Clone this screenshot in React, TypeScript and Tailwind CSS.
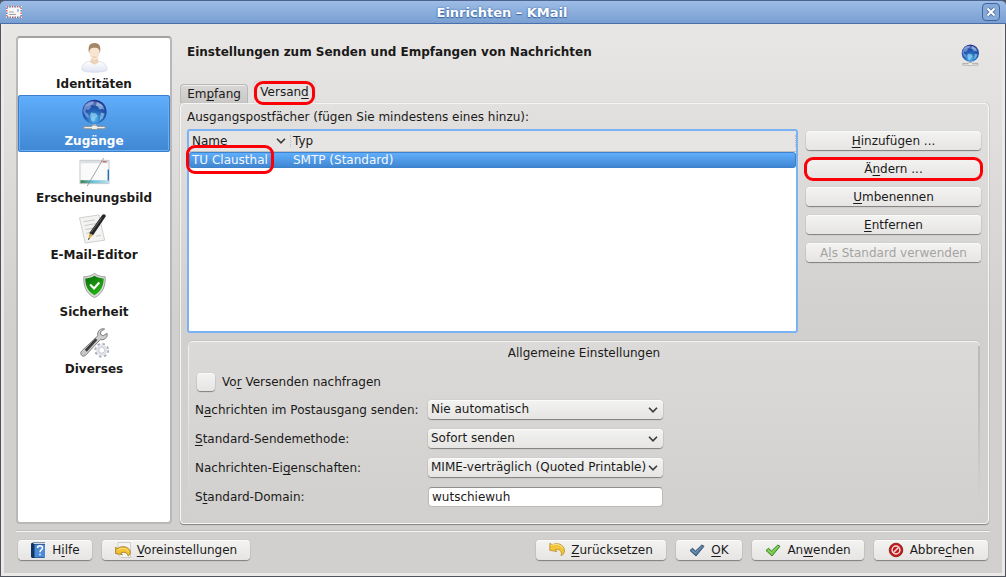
import type { ReactNode } from 'react'

const Key = ({ children }: { children: ReactNode }) => (
  <span className="underline decoration-1 underline-offset-2 [text-decoration-skip-ink:none]">
    {children}
  </span>
)

const GlobeIcon = ({ className, id }: { className: string; id: string }) => (
  <svg viewBox="0 0 32 32" className={className} aria-hidden="true">
    <defs>
      <radialGradient id={id} cx="0.5" cy="0.8" r="0.75">
        <stop offset="0" stopColor="#55bdf2" />
        <stop offset="0.45" stopColor="#2565b8" />
        <stop offset="1" stopColor="#1f3390" />
      </radialGradient>
    </defs>
    <path d="M15 26h3v3h-3z" fill="#c8c8c4" />
    <path d="M5.500 28.300h8l1-1.300h4l1 1.300H27.500v2.400h-8l-1 .8h-4l-1-.8h-8z" fill="#eeeeea" stroke="#85857e" strokeWidth="0.8" />
    <circle cx="16.500" cy="13.300" r="12.500" fill={`url(#${id})`} />
    <path d="M7 6c3-3 6-4 9-3.500l-1 3-3 1 1 2-3 3-2-1-1 3 3 2 1 4-3-1-3-5c0-3 .5-5 2-7.500z" fill="#93b8ea" opacity="0.6" />
    <path d="m19 3 5 3 3 5-3-1-2 1-2-3-2-1zM13 14l5 1 2 3-3 2-1 4-3-2-1-5zM23 14l4 1-2 5-3 2z" fill="#a7dcf7" opacity="0.6" />
    <path d="M6 8c3-7 17-8 21 1-6-3-14-3-21-1z" fill="#fff" opacity="0.22" />
  </svg>
)

const UserIcon = () => (
  <svg viewBox="0 0 32 32" className="size-8" aria-hidden="true">
    <defs>
      <linearGradient id="shirt" x1="0" y1="0" x2="0" y2="1">
        <stop offset="0" stopColor="#ffffff" />
        <stop offset="1" stopColor="#dfe3f2" />
      </linearGradient>
    </defs>
    <path d="M3.500 29c0-5 2-8 7-9l6 2 5-2c5 1 8 4 8 9-4 3-22 3-26 0z" fill="url(#shirt)" stroke="#c9cfe4" strokeWidth="0.6" />
    <path d="M13 17h7l1 4-4.500 2.500L12 21z" fill="#ecd3b8" />
    <ellipse cx="16.500" cy="11" rx="5" ry="7.500" fill="#f7e5d0" />
    <path d="M11 12C9.500 5 11 1 16.500 1S23.500 5 22 12c-.3-4-1-6-5.500-6S11.500 8 11 12z" fill="#a48566" />
    <path d="M14.500 15.500h4" stroke="#dcb69a" strokeWidth="0.8" />
  </svg>
)

const AppearanceIcon = () => (
  <svg viewBox="0 0 32 32" className="size-8" aria-hidden="true">
    <defs>
      <linearGradient id="status" x1="0" y1="0" x2="1" y2="0">
        <stop offset="0" stopColor="#3d7f48" />
        <stop offset="0.4" stopColor="#5fc0d0" />
        <stop offset="1" stopColor="#b8e0f0" />
      </linearGradient>
    </defs>
    <path d="M1.500 4.500h30v24h-30z" fill="#fafafa" stroke="#b4b8bc" strokeWidth="0.8" />
    <path d="M2 5h29v2.500H2z" fill="#dcdfe3" />
    <path d="M25 5.500h4v1h-4z" fill="#c8321e" />
    <path d="M30 14h1.500v12H30z" fill="#2673b8" />
    <path d="M2 25h29v3H2z" fill="url(#status)" />
    <path d="M26 2 9 31" stroke="#85888a" strokeWidth="0.8" />
  </svg>
)

const EditorIcon = () => (
  <svg viewBox="0 0 32 32" className="size-8" aria-hidden="true">
    <path d="m1 5 20-3 6 26-20 3z" fill="#f3f3f2" stroke="#c3c3c1" strokeWidth="0.8" />
    <path d="m5 9 12-2M6 13l12-2M7 17l9-1.500M8 21l5-1M18 24l5-1" stroke="#c4c4c4" strokeWidth="0.9" />
    <path d="M24.500 2c1.500-1.500 4-.5 3.500 1.500L15 23l-4-2z" fill="#262626" />
    <path d="M24 5 13 20" stroke="#777" strokeWidth="0.8" />
    <path d="m11 21 4 2-4.500 4z" fill="#d6ab43" />
    <path d="m10.500 25.500-.8 2.500 2-1.500z" fill="#222" />
  </svg>
)

const ShieldIcon = () => (
  <svg viewBox="0 0 32 32" className="size-8" aria-hidden="true">
    <defs>
      <linearGradient id="shield" x1="0" y1="0" x2="0.6" y2="1">
        <stop offset="0" stopColor="#0a6b0a" />
        <stop offset="1" stopColor="#22b414" />
      </linearGradient>
    </defs>
    <path d="M16.500 3.500c3 2.500 7 3.500 11 3.500.5 9-2 17-11 21.500C7.500 24 5 16 5.500 7c4 0 8-1 11-3.500z" fill="#dcdcdc" stroke="#929292" strokeWidth="0.9" />
    <path d="M16.500 6c3 2 6.500 2.500 9.500 2.800 0 8-3 13.700-9.500 17.200C10 22.500 7 17 7 8.800c3-.3 6.500-.8 9.500-2.800z" fill="url(#shield)" />
    <path d="m12 15 4 4 5.500-6" fill="none" stroke="#fff" strokeWidth="2.200" />
  </svg>
)

const ToolsIcon = () => (
  <svg viewBox="0 0 32 32" className="size-8" aria-hidden="true">
    <circle cx="24" cy="24" r="5.600" fill="none" stroke="#a9adbd" strokeWidth="4" strokeDasharray="2.200 2.200" />
    <circle cx="24" cy="24" r="4.500" fill="none" stroke="#e2e4ea" strokeWidth="2.800" />
    <circle cx="24" cy="24" r="3" fill="#fff" stroke="#a4a7b4" strokeWidth="0.6" />
    <path d="M27 2c-4-1-8 2-7 7L3 25c-2 3 1 6.500 4 4.500L22.500 13c4 1 8-2 7-6.500l-4 2.500-3-1.500.5-3z" fill="#cfcfcf" stroke="#6e6e6e" strokeWidth="0.9" />
    <path d="M18.500 12.500 7.500 24.500" stroke="#3c3c3c" strokeWidth="2.800" />
    <circle cx="5.500" cy="27" r="1.200" fill="#fff" stroke="#777" strokeWidth="0.5" />
  </svg>
)

const MailIcon = () => (
  <svg viewBox="0 0 16 12" className="h-3 w-4" aria-hidden="true">
    <path d="M0 0h16v12H0z" fill="#f7f7f7" />
    <path d="M.8.8h14.400v10.400H.8z" fill="none" stroke="#c9564a" strokeWidth="1.400" strokeDasharray="1.500 3.500" />
    <path d="M.8.8h14.400v10.400H.8z" fill="none" stroke="#4b73b0" strokeWidth="1.400" strokeDasharray="1.500 3.500" strokeDashoffset="2.500" />
    <path d="M3 6h5M3 8.500h7" stroke="#8a8a8a" strokeWidth="0.8" />
    <path d="M11 3h2v3h-2z" fill="#a9c4ea" />
  </svg>
)

const HelpIcon = () => (
  <svg viewBox="0 0 16 16" className="size-4" aria-hidden="true">
    <path d="M1 1.500 3 .5h12v14.500l-1 1H2l-1-1z" fill="#12365f" />
    <path d="M4.500 2.500H15V15.500H4.500z" fill="#4c8ad8" />
    <path d="M3.500 1.500H15" stroke="#e8eef6" strokeWidth="0.9" />
    <path d="M7.500 6c0-3 5-3 5 0 0 2-2.500 1.800-2.500 4.200M10 11.700v1.600" fill="none" stroke="#fff" strokeWidth="1.500" />
  </svg>
)

const DefaultsIcon = () => (
  <svg viewBox="0 0 16 16" className="size-4" aria-hidden="true">
    <path d="M3 .5h12.500v15H6L3 12.500z" fill="#f4f4f2" stroke="#bdbdb8" strokeWidth="0.7" />
    <path
      d="M.6 11.500V5.300l2 1.200c4-3.200 11.500-2.200 12.600 3 .3 1.800-.5 3.500-2 4.500-.8-2.700-2.500-3.900-5-3.700-1 .1-1.700.4-2.400.9l1.700 1.500z"
      fill="#f2c233"
      stroke="#9c7415"
      strokeWidth="0.8"
    />
    <path d="M3 8c3.500-2.500 8.500-2 10.500 1.500" fill="none" stroke="#fbe890" strokeWidth="0.9" />
  </svg>
)

const ResetIcon = () => (
  <svg viewBox="0 0 16 16" className="size-4" aria-hidden="true">
    <path d="M.7 8.300.9 1.200l2.300 1.600c5-2.800 11.500-.3 12.300 5.200.3 2.500-1 4.800-3.500 5.700 1.200-3.500-.5-6-3.500-6.200L6.500 7.600l1.300 2z" fill="#f2c437" stroke="#b38418" strokeWidth="0.7" />
    <path d="M2 3.500c5-2 10-1 12 3" fill="none" stroke="#fbe890" strokeWidth="1" />
  </svg>
)

const CheckIcon = ({ fill, stroke }: { fill: string; stroke: string }) => (
  <svg viewBox="0 0 16 16" className="size-4" aria-hidden="true">
    <path d="m1 8.500 2.500-2.200L6.500 9l6.300-6 2.200 1.300L7 14z" fill={fill} stroke={stroke} strokeWidth="0.9" strokeLinejoin="round" />
    <path d="m3 8.300 3.500 2.500L13 4.300" fill="none" stroke="#fff" strokeWidth="0.7" opacity="0.35" />
  </svg>
)

const CancelIcon = () => (
  <svg viewBox="0 0 16 16" className="size-4" aria-hidden="true">
    <circle cx="8" cy="8" r="6.800" fill="#c01c1c" stroke="#8c1010" strokeWidth="0.8" />
    <circle cx="8" cy="8" r="3.900" fill="none" stroke="#f4dada" strokeWidth="1.500" />
    <path d="m5.300 10.700 5.400-5.400" stroke="#f4dada" strokeWidth="1.600" />
  </svg>
)

const Chevron = ({ className }: { className: string }) => (
  <svg viewBox="0 0 10 6" className={className} aria-hidden="true">
    <path d="m1 .8 4 4 4-4" fill="none" stroke="#3a3a3a" strokeWidth="1.600" />
  </svg>
)

// red hand-drawn style marker laid over the thing it points at
const Marker = ({ className }: { className: string }) => (
  <span className={`pointer-events-none absolute z-10 rounded-[9px] border-3 border-[#fb0007] ${className}`} />
)

const RAISED =
  'rounded-[4px] bg-linear-to-b from-[#f3f3f2] to-[#e6e5e4] shadow-[0_1px_1px_#7f7e7c,0_0_1px_#9b9a98,inset_0_1px_0_#fbfbfb]'

const categories = [
  { label: 'Identitäten', icon: <UserIcon /> },
  { label: 'Zugänge', icon: <GlobeIcon className="size-8" id="globe-nav" />, active: true },
  { label: 'Erscheinungsbild', icon: <AppearanceIcon /> },
  { label: 'E-Mail-Editor', icon: <EditorIcon /> },
  { label: 'Sicherheit', icon: <ShieldIcon /> },
  { label: 'Diverses', icon: <ToolsIcon /> },
]

const accountActions = [
  { id: 'add', label: <><Key>H</Key>inzufügen ...</> },
  { id: 'modify', label: <>Ä<Key>n</Key>dern ...</>, marked: true },
  { id: 'rename', label: <><Key>U</Key>mbenennen</> },
  { id: 'remove', label: <><Key>E</Key>ntfernen</> },
  { id: 'default', label: <>A<Key>l</Key>s Standard verwenden</>, disabled: true },
]

const selects = [
  { id: 'outbox', label: <>N<Key>a</Key>chrichten im Postausgang senden:</>, value: 'Nie automatisch' },
  { id: 'method', label: <><Key>S</Key>tandard-Sendemethode:</>, value: 'Sofort senden' },
  { id: 'property', label: <>Nachrichten-Ei<Key>g</Key>enschaften:</>, value: 'MIME-verträglich (Quoted Printable)' },
]

const TitleBar = () => (
  <header className="flex h-6 items-center rounded-t-[5px] border-t border-b border-t-[#4a648f] border-b-[#4c6fa9] bg-linear-to-b from-[#9dbce6] to-[#799fd1] px-1.5">
    <MailIcon />
    <h1 className="flex-1 pt-0.5 text-center text-[13px] leading-5 font-bold text-white [text-shadow:0_0_2px_#3a66a8,0_1px_1px_#3a66a8]">
      Einrichten – KMail
    </h1>
    <button
      aria-label="Schließen"
      className="flex size-[18px] items-center justify-center rounded-[4px] border border-[#40659f] bg-[#86a9da]"
    >
      <svg viewBox="0 0 10 10" className="size-2.5" aria-hidden="true">
        <path d="m1.500 1.500 7 7m0-7-7 7" stroke="#44659a" strokeWidth="3.800" />
        <path d="m1.500 1.500 7 7m0-7-7 7" stroke="#fff" strokeWidth="2.200" />
      </svg>
    </button>
  </header>
)

const Sidebar = () => (
  <nav className="w-[156px] shrink-0 rounded-[4px] border-2 border-[#b9b8b6] border-t-[#a3a2a0] bg-white">
    {categories.map((item) => (
      <button
        key={item.label}
        className={`flex h-[57px] w-full flex-col items-center rounded-[3px] pt-1 leading-[22px] font-bold ${
          item.active
            ? 'bg-linear-to-b from-[#60aefc] to-[#4087d2] text-white shadow-[inset_0_0_0_1px_#3a7fcc,inset_0_0_0_2px_#69aef5]'
            : ''
        }`}
      >
        {item.icon}
        {item.label}
      </button>
    ))}
  </nav>
)

const TransportList = () => (
  <div className="relative flex-1 rounded-[3px] border-2 border-[#7ab2f4] bg-white">
    <Marker className="-left-[3px] top-3.5 h-[29px] w-[88px]" />
    <table className="w-full border-separate border-spacing-0 text-left">
      <thead>
        <tr className="h-[21px] bg-[#e6e5e4]">
          <th className="w-[101px] border-b border-[#c2c1bf] p-0 pl-[3px] font-normal">
            <span className="flex items-center justify-between pr-1">
              Name
              <Chevron className="h-1.5 w-2.5" />
            </span>
          </th>
          <th className="border-b border-[#c2c1bf] p-0 font-normal">
            <span className="flex h-3 items-center border-x border-dotted border-[#bdbcba] pl-0.5">
              Typ
            </span>
          </th>
        </tr>
      </thead>
      <tbody>
        <tr className="text-[#f4f8fd]">
          <td className="h-4 rounded-l-[3px] border-y border-l border-[#3d82cd] bg-linear-to-b from-[#60aefc] to-[#4087d2] p-0 pl-0.5 leading-[14px]">
            TU Clausthal
          </td>
          <td className="rounded-r-[3px] border-y border-r border-[#3d82cd] bg-linear-to-b from-[#60aefc] to-[#4087d2] p-0 pl-[3px] leading-[14px]">
            SMTP (Standard)
          </td>
        </tr>
      </tbody>
    </table>
  </div>
)

const GeneralSettings = () => (
  <fieldset className="relative mx-px mt-2 h-44 rounded-t-[5px] border-t border-[#f4f4f3] bg-linear-to-b from-[#dbdad8] to-[#d1d0ce] px-[7px] shadow-[0_-1px_0_#c4c3c1]">
    <span className="pointer-events-none absolute inset-y-1 left-0 w-px bg-linear-to-b from-[#f1f1f0] via-[#e4e3e2] to-transparent" />
    <span className="pointer-events-none absolute inset-y-1 right-0 w-0.5 bg-linear-to-b from-[#bbbab8] via-[#c2c1bf] to-transparent" />
    <h2 className="h-[23px] text-center leading-[23px]">Allgemeine Einstellungen</h2>
    <label className="mt-[7px] mb-2 flex h-5 items-center gap-[7px] pl-0.5">
      <input type="checkbox" className={`size-[18px] appearance-none ${RAISED}`} />
      <span>
        Vo<Key>r</Key> Versenden nachfragen
      </span>
    </label>
    <div className="grid grid-cols-[233px_235px] items-center gap-y-[9px]">
      {selects.map((field) => (
        <div key={field.id} className="contents">
          <label htmlFor={field.id} className="whitespace-nowrap">
            {field.label}
          </label>
          <div className="relative h-5">
            <select
              id={field.id}
              className={`block h-[19px] w-full appearance-none pl-[3px] leading-[19px] ${RAISED}`}
            >
              <option>{field.value}</option>
            </select>
            <Chevron className="pointer-events-none absolute top-[7px] right-[5px] h-1.5 w-2.5" />
          </div>
        </div>
      ))}
      <label htmlFor="domain">
        S<Key>t</Key>andard-Domain:
      </label>
      <input
        id="domain"
        defaultValue="wutschiewuh"
        className="h-5 w-full rounded-[4px] border border-[#bbbab8] border-t-[#8f8e8c] bg-white px-[3px]"
      />
    </div>
  </fieldset>
)

const FooterButton = ({ className, icon, children }: { className: string; icon: ReactNode; children: ReactNode }) => (
  <button className={`flex h-5 items-center justify-center gap-1.5 ${RAISED} ${className}`}>
    {icon}
    <span>{children}</span>
  </button>
)

const Footer = () => (
  <footer className="flex gap-2.5 px-0.5 pt-2">
    <FooterButton className="w-[74px]" icon={<HelpIcon />}>
      H<Key>i</Key>lfe
    </FooterButton>
    <FooterButton className="mr-auto w-[148px]" icon={<DefaultsIcon />}>
      <Key>V</Key>oreinstellungen
    </FooterButton>
    <FooterButton className="w-[130px]" icon={<ResetIcon />}>
      <Key>Z</Key>urücksetzen
    </FooterButton>
    <FooterButton className="w-[66px]" icon={<CheckIcon fill="#54799f" stroke="#294a6e" />}>
      <Key>O</Key>K
    </FooterButton>
    <FooterButton className="w-28" icon={<CheckIcon fill="#74c748" stroke="#347a1a" />}>
      An<Key>w</Key>enden
    </FooterButton>
    <FooterButton className="w-[114px]" icon={<CancelIcon />}>
      Abbre<Key>c</Key>hen
    </FooterButton>
  </footer>
)

export default function App() {
  return (
    <div className="flex min-h-screen flex-col bg-[#50545c] font-['DejaVu_Sans',sans-serif] text-[12px] text-[#1b1a19]">
      <TitleBar />
      <div className="mx-px mb-px flex flex-1 flex-col border-x-3 border-b-3 border-[#ebeae9] bg-linear-to-b from-[#e8e7e6] to-[#d1d0ce] to-55% px-3 pt-3 pb-[13px]">
        <div className="flex flex-1 gap-2">
          <Sidebar />
          <main className="mr-px flex min-w-0 flex-1 flex-col">
            <div className="flex h-11 items-start justify-between pr-2 pl-[7px]">
              <h2 className="leading-8 font-bold">
                Einstellungen zum Senden und Empfangen von Nachrichten
              </h2>
              <GlobeIcon className="mt-2 size-[22px]" id="globe-head" />
            </div>
            <div role="tablist" className="flex h-[23px] items-end gap-1.5">
              <button
                role="tab"
                aria-selected="false"
                className="h-[19px] w-[68px] rounded-t-[4px] border border-b-0 border-[#b9b8b6] bg-linear-to-b from-[#d8d7d5] to-[#c9c8c6] shadow-[inset_0_1px_0_#efefee]"
              >
                Em<Key>p</Key>fang
              </button>
              <button
                role="tab"
                aria-selected="true"
                className="relative h-[22px] w-[61px] rounded-t-[4px] bg-[#e3e2e1] leading-[22px] shadow-[0_0_1px_#999]"
              >
                Versan<Key>d</Key>
                <Marker className="top-0 left-0 h-6 w-[61px]" />
              </button>
            </div>
            <section className="flex flex-1 flex-col rounded-[4px] border border-[#f5f5f4] pr-[7px] pb-1.5 pl-1.5 shadow-[0_1px_1px_#83827f,0_0_1px_#9b9a98]">
              <p className="h-[25px] leading-[27px]">
                Ausgangspostfächer (fügen Sie mindestens eines hinzu):
              </p>
              <div className="flex flex-1 gap-2">
                <TransportList />
                <div className="flex w-[175px] flex-col gap-[9px] pt-0.5">
                  {accountActions.map((action) => (
                    <button
                      key={action.id}
                      disabled={action.disabled}
                      className={`relative h-[19px] disabled:text-[#a5a4a2] ${RAISED}`}
                    >
                      {action.label}
                      {action.marked && <Marker className="-inset-x-0.5 -top-0.5 h-6" />}
                    </button>
                  ))}
                </div>
              </div>
              <GeneralSettings />
            </section>
          </main>
        </div>
        <hr className="mt-1.5 h-0.5 border-t border-b border-t-[#bfbebc] border-b-[#f5f5f4]" />
        <Footer />
      </div>
    </div>
  )
}
